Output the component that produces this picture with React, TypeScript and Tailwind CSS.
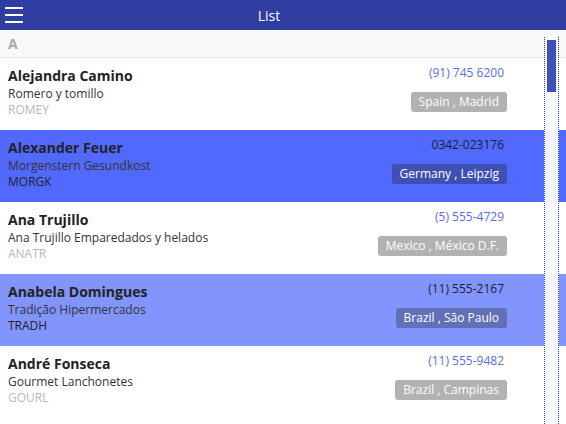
import React from "react";

type Contact = {
  name: string;
  company: string;
  code: string;
  phone: string;
  place: string;
  tone: "none" | "strong" | "soft";
};

const CONTACTS: Contact[] = [
  { name: "Alejandra Camino", company: "Romero y tomillo", code: "ROMEY", phone: "(91) 745 6200", place: "Spain , Madrid", tone: "none" },
  { name: "Alexander Feuer", company: "Morgenstern Gesundkost", code: "MORGK", phone: "0342-023176", place: "Germany , Leipzig", tone: "strong" },
  { name: "Ana Trujillo", company: "Ana Trujillo Emparedados y helados", code: "ANATR", phone: "(5) 555-4729", place: "Mexico , México D.F.", tone: "none" },
  { name: "Anabela Domingues", company: "Tradição Hipermercados", code: "TRADH", phone: "(11) 555-2167", place: "Brazil , São Paulo", tone: "soft" },
  { name: "André Fonseca", company: "Gourmet Lanchonetes", code: "GOURL", phone: "(11) 555-9482", place: "Brazil , Campinas", tone: "none" },
];

function Row({ c }: { c: Contact }) {
  const bg = c.tone === "strong" ? "bg-[#5169fe]" : c.tone === "soft" ? "bg-[#8294fe]" : "bg-white";
  const phone = c.tone === "none" ? "text-[#5a6cf2]" : "text-[#1f1f2e]";
  const code = c.tone === "none" ? "text-[#b8b8b8]" : "text-[#1f1f2e]";
  const badge = c.tone === "strong" ? "bg-[#3e50b4]" : c.tone === "soft" ? "bg-[#6270b6]" : "bg-[#b2b2b2]";
  return (
    <div className={`flex h-[72px] ${bg}`}>
      <div className="flex w-[543px] justify-between pl-2 pr-9">
        <div className="flex flex-col pt-[8px]">
          <span className="text-[14px] font-bold leading-[19px] text-[#222]">{c.name}</span>
          <span className="text-[12px] leading-[17px] text-[#333]">{c.company}</span>
          <span className={`text-[12px] leading-[15px] ${code}`}>{c.code}</span>
        </div>
        <div className="flex flex-col items-end pt-[6px]">
          <span className={`mr-[3px] text-[12px] leading-[17px] ${phone}`}>{c.phone}</span>
          <span className={`mt-[11px] rounded-[3px] px-2 text-[12px] leading-[20px] text-white ${badge}`}>{c.place}</span>
        </div>
      </div>
    </div>
  );
}

export default function App() {
  return (
    <div className="relative h-[424px] w-[566px] overflow-hidden bg-white" style={{ fontFamily: '"Open Sans", "Noto Sans", sans-serif' }}>
      {/* Top bar */}
      <div className="relative flex h-[30px] items-center justify-center bg-[#2e3d9f] pr-[28px]">
        <svg className="absolute left-[5px] top-[7px]" width="18" height="16" viewBox="0 0 18 16">
          <rect x="0" y="0" width="18" height="2" fill="#fff" />
          <rect x="0" y="7" width="18" height="2" fill="#fff" />
          <rect x="0" y="14" width="18" height="2" fill="#fff" />
        </svg>
        <span className="text-[14px] text-white">List</span>
      </div>

      {/* Group header */}
      <div className="flex h-[28px] items-center border-b border-[#e6e6e6] bg-[#f9f9f9] pl-2">
        <span className="text-[14px] font-bold text-[#a8a8a8]">A</span>
      </div>

      {CONTACTS.map((c) => (
        <Row key={c.code} c={c} />
      ))}

      {/* Scrollbar */}
      <div className="absolute bottom-0 left-[544px] top-[37px] flex w-[15px] bg-[#fafbff]/95">
        <div className="h-full w-px border-l border-dotted border-[#2a3fd0]" />
        <div className="ml-[2px] mt-[3px] h-[52px] w-[9px] bg-[#3f51b5]" />
        <div className="ml-[2px] h-full w-px border-l border-dotted border-[#2a3fd0]" />
      </div>
    </div>
  );
}
